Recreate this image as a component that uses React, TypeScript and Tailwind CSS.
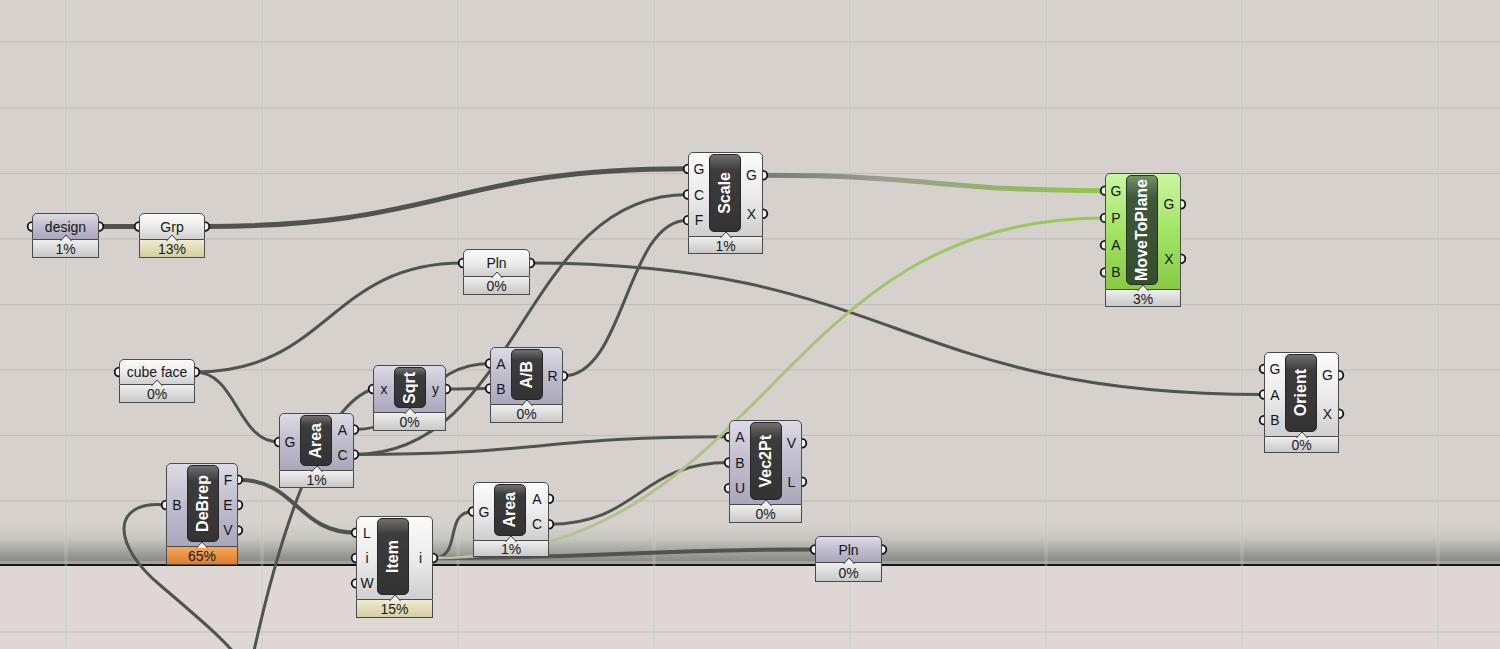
import React from "react";

type V = "white" | "purple" | "green";
type PV = "gray" | "khaki" | "orange";

type Base = { x: number; y: number; w: number; h: number; v: V; pct: string; pv: PV; ph: number };
type ParamNode = Base & { kind: "param"; label: string };
type CompNode = Base & { kind: "comp"; name: string; ins: string[]; outs: string[] };
type GNode = ParamNode | CompNode;

const N: Record<string, GNode> = {
  design: { kind: "param", label: "design", x: 32, y: 213, w: 67, h: 27, v: "purple", pct: "1%", pv: "gray", ph: 18 },
  grp: { kind: "param", label: "Grp", x: 139, y: 213, w: 66, h: 27, v: "white", pct: "13%", pv: "khaki", ph: 18 },
  pln1: { kind: "param", label: "Pln", x: 463, y: 249, w: 67, h: 28, v: "white", pct: "0%", pv: "gray", ph: 18 },
  cube: { kind: "param", label: "cube face", x: 119, y: 359, w: 76, h: 26, v: "white", pct: "0%", pv: "gray", ph: 18 },
  pln2: { kind: "param", label: "Pln", x: 815, y: 536, w: 67, h: 27, v: "purple", pct: "0%", pv: "gray", ph: 19 },
  scale: { kind: "comp", name: "Scale", ins: ["G", "C", "F"], outs: ["G", "X"], x: 688, y: 152, w: 75, h: 85, v: "white", pct: "1%", pv: "gray", ph: 17 },
  mtp: { kind: "comp", name: "MoveToPlane", ins: ["G", "P", "A", "B"], outs: ["G", "X"], x: 1105, y: 173, w: 76, h: 117, v: "green", pct: "3%", pv: "gray", ph: 17 },
  areaL: { kind: "comp", name: "Area", ins: ["G"], outs: ["A", "C"], x: 279, y: 413, w: 75, h: 58, v: "purple", pct: "1%", pv: "gray", ph: 17 },
  sqrt: { kind: "comp", name: "Sqrt", ins: ["x"], outs: ["y"], x: 373, y: 365, w: 73, h: 48, v: "purple", pct: "0%", pv: "gray", ph: 18 },
  ab: { kind: "comp", name: "A/B", ins: ["A", "B"], outs: ["R"], x: 490, y: 347, w: 73, h: 58, v: "purple", pct: "0%", pv: "gray", ph: 18 },
  debrep: { kind: "comp", name: "DeBrep", ins: ["B"], outs: ["F", "E", "V"], x: 166, y: 463, w: 72, h: 84, v: "purple", pct: "65%", pv: "orange", ph: 18 },
  item: { kind: "comp", name: "Item", ins: ["L", "i", "W"], outs: ["i"], x: 356, y: 516, w: 77, h: 84, v: "white", pct: "15%", pv: "khaki", ph: 18 },
  areaR: { kind: "comp", name: "Area", ins: ["G"], outs: ["A", "C"], x: 473, y: 482, w: 76, h: 59, v: "white", pct: "1%", pv: "gray", ph: 16 },
  vec: { kind: "comp", name: "Vec2Pt", ins: ["A", "B", "U"], outs: ["V", "L"], x: 729, y: 420, w: 73, h: 85, v: "purple", pct: "0%", pv: "gray", ph: 18 },
  orient: { kind: "comp", name: "Orient", ins: ["G", "A", "B"], outs: ["G", "X"], x: 1264, y: 352, w: 75, h: 85, v: "white", pct: "0%", pv: "gray", ph: 16 },
};

function portY(n: GNode, i: number, count: number) {
  if (n.kind === "param") return n.y + n.h / 2;
  return n.y + 4 + ((n.h - 8) * (i + 0.5)) / count;
}
function inP(id: string, i: number): [number, number] {
  const n = N[id];
  const c = n.kind === "comp" ? n.ins.length : 1;
  return [n.x, portY(n, i, c)];
}
function outP(id: string, i: number): [number, number] {
  const n = N[id];
  const c = n.kind === "comp" ? n.outs.length : 1;
  return [n.x + n.w, portY(n, i, c)];
}
function wire(a: [number, number], b: [number, number], kMin = 24) {
  const dx = b[0] - a[0];
  const k = Math.max(Math.abs(dx) * 0.5, kMin);
  return `M${a[0]} ${a[1]} C${a[0] + k} ${a[1]} ${b[0] - k} ${b[1]} ${b[0]} ${b[1]}`;
}

const DARK = "#50534e";

const wires: { d: string; w: number; s: string }[] = [
  { d: wire(outP("design", 0), inP("grp", 0)), w: 5, s: DARK },
  { d: wire(outP("grp", 0), inP("scale", 0)), w: 5, s: DARK },
  { d: wire(outP("scale", 0), inP("mtp", 0)), w: 5, s: "url(#g1)" },
  { d: wire(outP("pln1", 0), inP("orient", 1)), w: 3, s: DARK },
  { d: wire(outP("cube", 0), inP("pln1", 0)), w: 3, s: DARK },
  { d: wire(outP("cube", 0), inP("areaL", 0)), w: 3, s: DARK },
  { d: wire(outP("areaL", 0), inP("ab", 0)), w: 3, s: DARK },
  { d: wire(outP("areaL", 1), inP("scale", 1)), w: 3, s: DARK },
  { d: wire(outP("areaL", 1), inP("vec", 0)), w: 3, s: DARK },
  { d: wire(outP("sqrt", 0), inP("ab", 1)), w: 3, s: DARK },
  { d: wire(outP("ab", 0), inP("scale", 2)), w: 3, s: DARK },
  { d: wire(outP("areaR", 1), inP("vec", 1)), w: 3, s: DARK },
  { d: wire(outP("item", 0), inP("areaR", 0), 30), w: 3, s: DARK },
  { d: wire(outP("item", 0), inP("pln2", 0)), w: 4, s: DARK },
  { d: wire(outP("debrep", 0), inP("item", 0)), w: 4, s: DARK },
  { d: "M252 660 C280 530 322 405 373 389", w: 3, s: DARK },
  { d: "M166 505 C110 500 112 545 160 585 C195 615 225 640 240 660", w: 3, s: DARK },
  { d: wire(outP("item", 0), inP("mtp", 1)), w: 3, s: "url(#g2)" },
];

const bodyCls: Record<V, string> = {
  white: "bg-linear-to-b from-[#fbfbfb] via-[#ececec] to-[#cfcfcf]",
  purple: "bg-linear-to-b from-[#dddbe6] via-[#bfbdcd] to-[#a9a7ba]",
  green: "bg-linear-to-b from-[#c8f7a0] via-[#a2e363] to-[#88ca46]",
};
const labelCls: Record<V, string> = {
  white: "bg-linear-to-b from-[#707070] from-0% via-[#3c3c3c] via-20% to-[#333333] border-[#262626]",
  purple: "bg-linear-to-b from-[#707070] from-0% via-[#3c3c3c] via-20% to-[#333333] border-[#262626]",
  green: "bg-linear-to-b from-[#768f6c] from-0% via-[#40583a] via-20% to-[#364c31] border-[#243320]",
};
const pctCls: Record<PV, string> = {
  gray: "bg-linear-to-b from-[#efefef] to-[#c8c8c8]",
  khaki: "bg-linear-to-b from-[#efecd0] to-[#d4cea2]",
  orange: "bg-linear-to-b from-[#f3a85a] to-[#de7d2a]",
};

function Node({ n }: { n: GNode }) {
  return (
    <div className="absolute flex flex-col text-[#161616]" style={{ left: n.x, top: n.y, width: n.w }}>
      <div className={`relative rounded-t-[5px] border border-[#4a4a4a] ${bodyCls[n.v]}`} style={{ height: n.h }}>
        {n.kind === "param" ? (
          <div className="flex h-full items-center justify-center text-[14px] leading-none">{n.label}</div>
        ) : (
          <div className="flex h-full">
            <div className="flex w-[20px] flex-col py-[3px]">
              {n.ins.map((l, i) => (
                <div key={i} className="flex flex-1 items-center justify-center text-[14px] leading-none">
                  {l}
                </div>
              ))}
            </div>
            <div className={`mt-[1px] mb-[4px] flex w-[32px] items-center justify-center rounded-[5px] border ${labelCls[n.v]}`}>
              <span className="rotate-180 whitespace-nowrap text-[16px] font-bold leading-none text-white [writing-mode:vertical-rl]">
                {n.name}
              </span>
            </div>
            <div className="flex flex-1 flex-col py-[3px]">
              {n.outs.map((l, i) => (
                <div key={i} className="flex flex-1 items-center justify-center text-[14px] leading-none">
                  {l}
                </div>
              ))}
            </div>
          </div>
        )}
      </div>
      <div
        className={`relative flex items-center justify-center border border-t-0 border-[#4a4a4a] text-[14px] leading-none text-[#1a1a1a] ${pctCls[n.pv]}`}
        style={{ height: n.ph }}
      >
        <svg className="absolute left-1/2 top-[-6px] -translate-x-1/2" width="12" height="7" viewBox="0 0 12 7">
          <path d="M0.5 7 L6 1 L11.5 7" fill="#f4f4f4" stroke="#3a3a3a" strokeWidth="1" />
        </svg>
        <span className="pt-[1px]">{n.pct}</span>
      </div>
    </div>
  );
}

const vLines = [66, 262, 458, 654, 850, 1046, 1242, 1438];
const hLines = [42, 108, 173.5, 239, 304.5, 370, 435.5, 501, 632];

export default function App() {
  const ports: [number, number][] = [];
  Object.keys(N).forEach((id) => {
    const n = N[id];
    if (n.kind === "param") {
      ports.push(inP(id, 0), outP(id, 0));
    } else {
      n.ins.forEach((_, i) => ports.push(inP(id, i)));
      n.outs.forEach((_, i) => ports.push(outP(id, i)));
    }
  });

  return (
    <div className="relative h-[649px] w-[1500px] overflow-hidden font-['Liberation_Sans',Arial,sans-serif]">
      <div className="flex h-full flex-col">
        <div className="h-[524px] bg-[#d7d1ce]" />
        <div className="h-[37px] bg-linear-to-b from-[#d7d1ce] via-[#c6c6c0] via-40% to-[#8a8b86]" />
        <div className="h-[3px] bg-[#a3a49f]" />
        <div className="h-[2px] bg-[#151515]" />
        <div className="flex-1 bg-[#ded7d5]" />
      </div>

      <svg className="pointer-events-none absolute left-0 top-0" width="1500" height="649">
        {hLines.map((y) => (
          <line key={y} x1="0" x2="1500" y1={y} y2={y} stroke="#000" strokeOpacity="0.1" strokeWidth="1.2" />
        ))}
        {vLines.map((x) => (
          <g key={x}>
            <rect x={x - 1.5} y="0" width="3" height="649" fill="#e6f0e6" fillOpacity="0.3" />
            <line x1={x} x2={x} y1="0" y2="649" stroke="#000" strokeOpacity="0.12" strokeWidth="1" />
          </g>
        ))}
      </svg>

      <svg className="pointer-events-none absolute left-0 top-0" width="1500" height="649">
        <defs>
          <linearGradient id="g1" gradientUnits="userSpaceOnUse" x1="763" y1="175" x2="1105" y2="191">
            <stop offset="0" stopColor="#7a7c75" />
            <stop offset="0.35" stopColor="#9a9d92" />
            <stop offset="1" stopColor="#8ccb45" />
          </linearGradient>
          <linearGradient id="g2" gradientUnits="userSpaceOnUse" x1="433" y1="558" x2="1105" y2="216">
            <stop offset="0" stopColor="#bcbfa4" />
            <stop offset="0.5" stopColor="#a8c47c" />
            <stop offset="1" stopColor="#93ca54" />
          </linearGradient>
        </defs>
        {wires.map((w, i) => (
          <path key={i} d={w.d} fill="none" stroke={w.s} strokeWidth={w.w} strokeLinecap="round" />
        ))}
        {ports.map((p, i) => (
          <circle key={i} cx={p[0]} cy={p[1]} r="4.3" fill="#f2f2f2" stroke="#111" strokeWidth="1.8" />
        ))}
      </svg>

      {Object.keys(N).map((id) => (
        <Node key={id} n={N[id]} />
      ))}
    </div>
  );
}
